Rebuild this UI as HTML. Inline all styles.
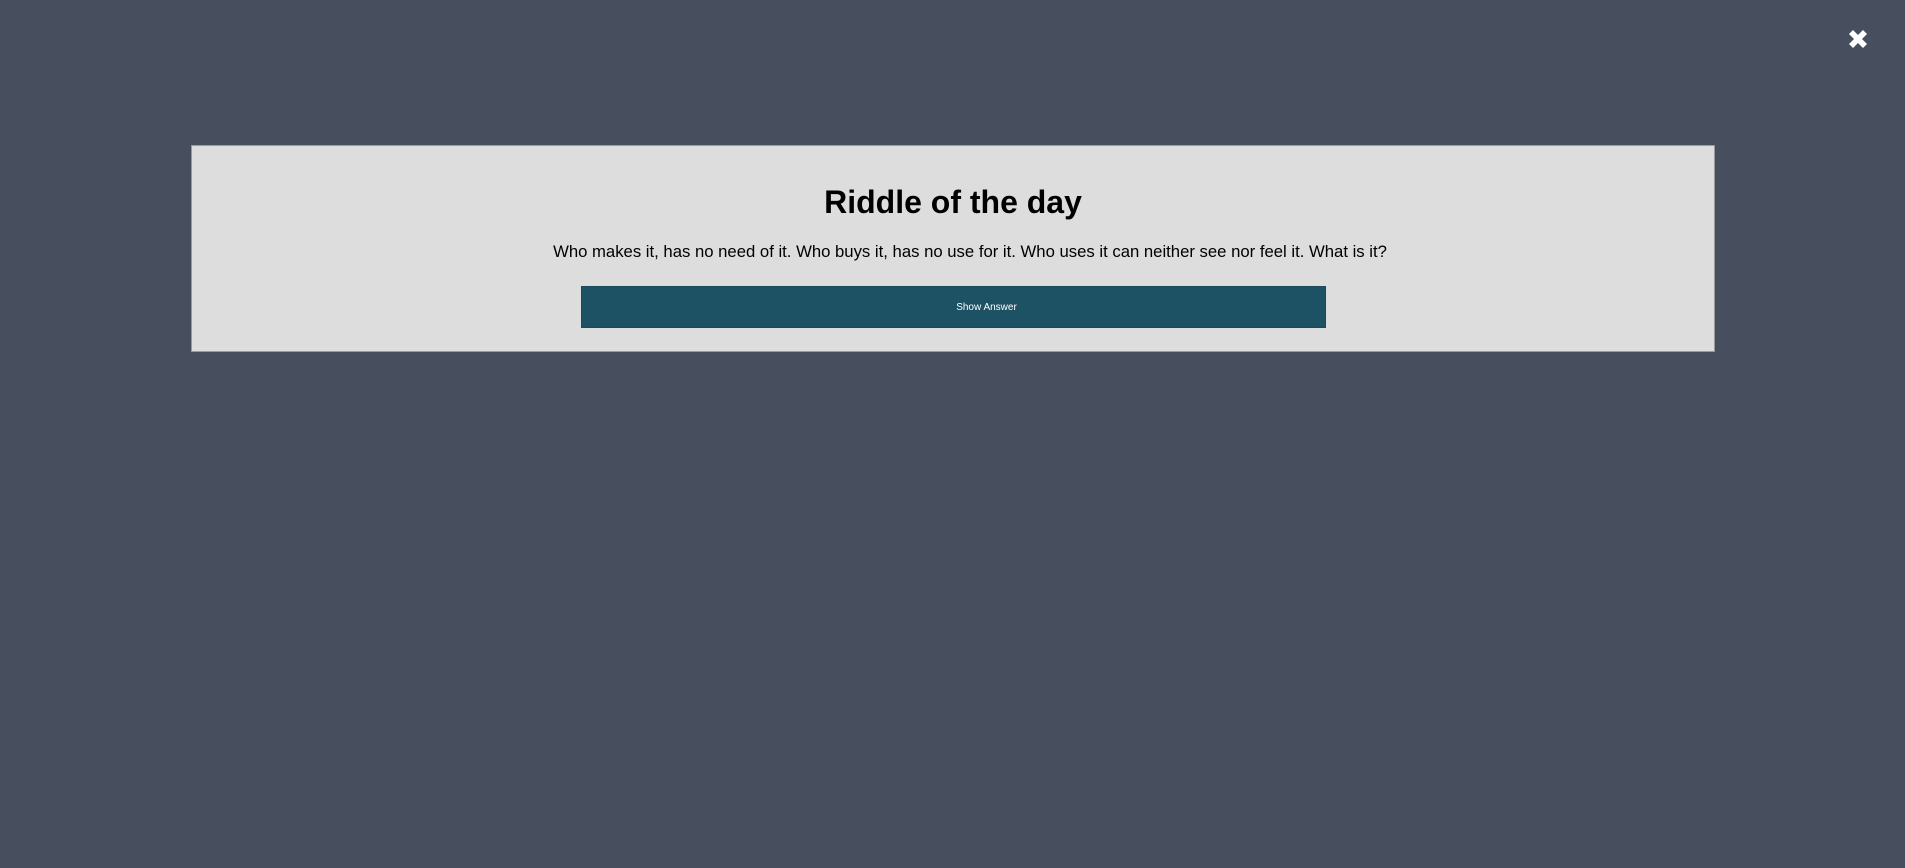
<!DOCTYPE html>
<html><head><meta charset="utf-8"><style>
html,body{margin:0;padding:0;width:1905px;height:868px;overflow:hidden;background:#474f5f;font-family:"Liberation Sans",Arial,sans-serif;}
.box{position:absolute;left:191px;top:145px;width:1522px;height:205px;background:#dddddd;border:1px solid #9a9a9a;text-align:center;}
h1{position:absolute;left:0;right:0;top:36px;margin:0;font-size:32px;line-height:40px;font-weight:bold;color:#000;}
p{position:absolute;left:34px;right:0;top:96px;margin:0;font-size:16.7px;line-height:20px;color:#000;}
.btn{position:absolute;left:389px;top:140px;width:743px;height:40px;background:#1d5264;border:1px solid #1a4a5a;color:#fff;font-size:10px;line-height:42px;}
.btn span{position:relative;left:33px;}
.x{position:absolute;left:1845px;top:26px;width:26px;height:26px;}
</style></head><body>
<svg class="x" viewBox="0 0 26 26"><path d="M4 8 L8 4 L13 9 L18 4 L22 8 L17 13 L22 18 L18 22 L13 17 L8 22 L4 18 L9 13 Z" fill="#fff"/></svg>
<div class="box">
<h1>Riddle of the day</h1>
<p>Who makes it, has no need of it. Who buys it, has no use for it. Who uses it can neither see nor feel it. What is it?</p>
<div class="btn"><span>Show Answer</span></div>
</div>
</body></html>
